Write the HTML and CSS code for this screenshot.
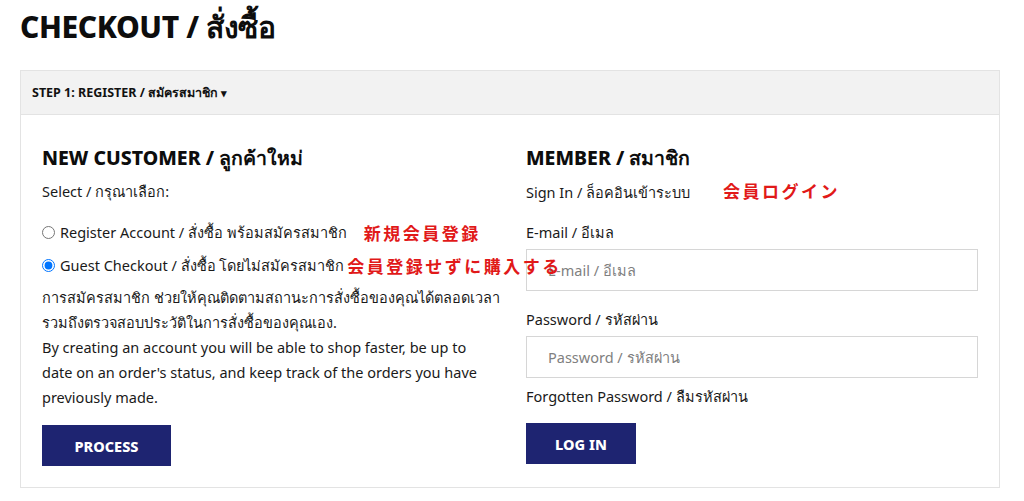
FILE: index.html
```html
<!DOCTYPE html>
<html lang="th">
<head>
    <meta charset="UTF-8">
    <meta name="viewport" content="width=device-width, initial-scale=1.0">
    <title>Checkout</title>
    <link rel="stylesheet" href="styles.css">
</head>
<body>
    <h1 class="page-title">CHECKOUT / สั่งซื้อ</h1>
    <div class="panel">
        <div class="panel-heading">STEP 1: REGISTER / สมัครสมาชิก <span class="caret">&#9662;</span></div>
        <div class="panel-body">
            <div class="col">
                <h2>NEW CUSTOMER / ลูกค้าใหม่</h2>
                <p class="sub">Select / กรุณาเลือก:</p>
                <label class="radio"><input type="radio" name="account"> Register Account / สั่งซื้อ พร้อมสมัครสมาชิก <span class="note note-wide">新規会員登録</span></label>
                <label class="radio"><input type="radio" name="account" checked> Guest Checkout / สั่งซื้อ โดยไม่สมัครสมาชิก <span class="note">会員登録せずに購入する</span></label>
                <p class="info"><span class="nowrap">การสมัครสมาชิก ช่วยให้คุณติดตามสถานะการสั่งซื้อของคุณได้ตลอดเวลา</span><br>รวมถึงตรวจสอบประวัติในการสั่งซื้อของคุณเอง.<br>By creating an account you will be able to shop faster, be up to date on an order's status, and keep track of the orders you have previously made.</p>
                <button class="btn btn-process">PROCESS</button>
            </div>
            <div class="col">
                <h2>MEMBER / สมาชิก</h2>
                <p class="sub">Sign In / ล็อคอินเข้าระบบ <span class="note note-login">会員ログイン</span></p>
                <label class="field-label" for="email">E-mail / อีเมล</label>
                <input class="field" type="text" id="email" placeholder="E-mail / อีเมล">
                <label class="field-label" for="password">Password / รหัสผ่าน</label>
                <input class="field" type="password" id="password" placeholder="Password / รหัสผ่าน">
                <a class="forgot" href="#">Forgotten Password / ลืมรหัสผ่าน</a>
                <button class="btn btn-login">LOG IN</button>
            </div>
        </div>
    </div>
</body>
</html>
```

FILE: styles.css
```css
body { margin: 0; padding: 0 20px; font-family: "Noto Sans", sans-serif; color: #1a1a1a; background: #fff; }
.page-title { margin: 0; padding-top: 4px; height: 70px; box-sizing: border-box; font-size: 30px; font-weight: 800; letter-spacing: -0.4px; color: #0d0d0d; }
.panel { width: 978px; border: 1px solid #e3e3e3; }
.panel-heading { height: 43px; line-height: 43px; padding: 0 11px; background: #f2f2f2; border-bottom: 1px solid #e3e3e3; font-size: 12.5px; font-weight: 700; color: #111; }
.caret { font-size: 11px; }
.panel-body { display: grid; grid-template-columns: 452px 452px; gap: 32px; padding: 28px 21px 21px; }
.col { display: flex; flex-direction: column; align-items: flex-start; }
h2 { margin: 0; font-size: 19.5px; font-weight: 800; height: 30px; line-height: 30px; color: #0d0d0d; }
.sub { margin: 6px 0 0; font-size: 14.5px; line-height: 24px; }
.radio { display: flex; align-items: center; gap: 3px; font-size: 14.5px; line-height: 25px; white-space: nowrap; }
.radio:first-of-type { margin-top: 17px; }
.radio + .radio { margin-top: 8px; }
.radio input { margin: 0 2px 0 0; width: 13px; height: 13px; }
.note { position: relative; z-index: 1; color: #e11919; font-family: "Noto Sans CJK JP", sans-serif; font-weight: 700; font-size: 17px; letter-spacing: 2.5px; margin-left: 0; }
.note-wide { margin-left: 14px; }
.note-login { margin-left: 29px; }
.info { margin: 7px 0 0; font-size: 14.5px; line-height: 25px; }
.nowrap { white-space: nowrap; }
.btn { margin-top: 15px; height: 41px; border: none; background: #1e2471; color: #fff; font-family: inherit; font-size: 14.5px; font-weight: 800; cursor: pointer; }
.btn-process { width: 129px; }
.btn-login { width: 110px; }
.field-label { margin-top: 16px; font-size: 14.5px; line-height: 24px; }
.field { box-sizing: border-box; width: 100%; height: 42px; margin-top: 5px; padding: 0 21px; border: 1px solid #d6d6d6; font-family: inherit; font-size: 14.5px; }
.field::placeholder { color: #808080; }
.field + .field-label { margin-top: 16px; }
.forgot { margin-top: 6px; font-size: 14.5px; line-height: 24px; color: #1a1a1a; text-decoration: none; }
```
